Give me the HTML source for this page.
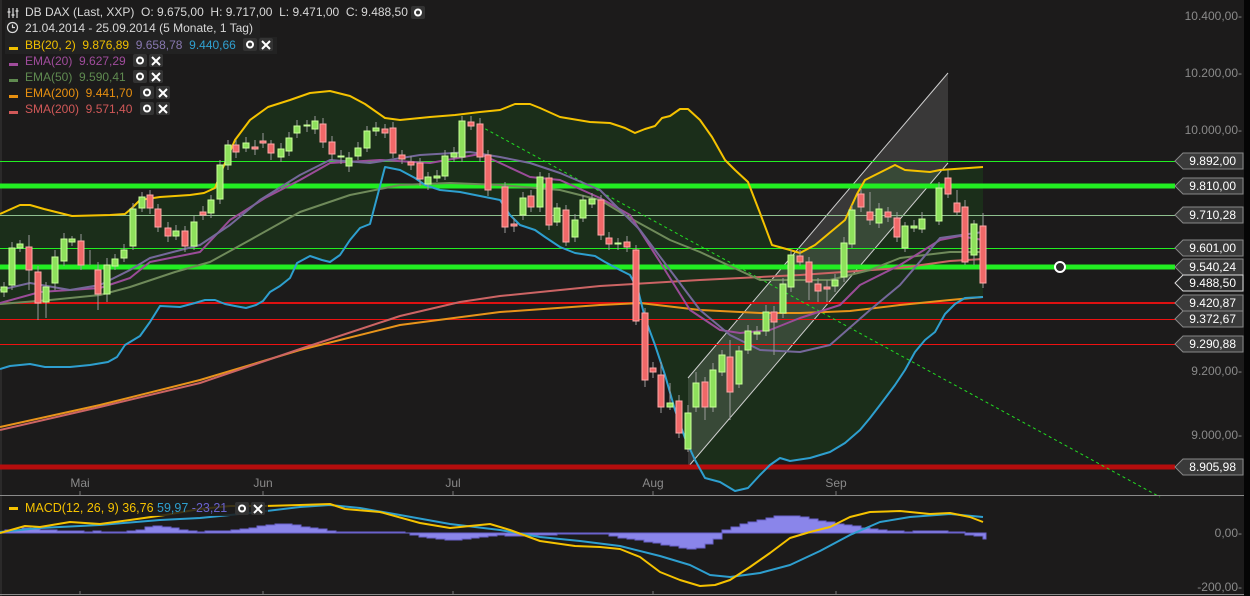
<!DOCTYPE html>
<html><head><meta charset="utf-8"><style>
html,body{margin:0;padding:0;background:#1c1b1b;width:1250px;height:596px;overflow:hidden;font-family:"Liberation Sans",sans-serif}
svg{display:block}
</style></head><body>
<svg width="1250" height="596" viewBox="0 0 1250 596" xmlns="http://www.w3.org/2000/svg" font-family="Liberation Sans, sans-serif">
<rect width="1250" height="596" fill="#1c1b1b"/>
<rect x="1244" y="0" width="6" height="596" fill="#050505"/>
<line x1="1" y1="0" x2="1" y2="596" stroke="#3a3a3a"/>

<path fill="#1b2e1a" d="M0,214 L20,205 L30,205 L44,209 L72,216 L110,215 L125,214 L132,208 L140,200 L160,197 L190,195 L204,193 L215,188 L222,170 L235,140 L250,120 L268,107 L290,100 L310,93 L330,91 L350,96 L365,104 L385,118 L400,120 L430,117 L455,115 L480,112 L500,110 L515,104 L530,104 L540,108 L560,117 L590,122 L610,123 L625,128 L635,133 L645,129 L655,126 L662,118 L670,116 L680,109 L688,109 L700,120 L712,137 L725,160 L735,170 L748,182 L760,213 L772,245 L790,250 L800,253 L815,245 L833,230 L845,220 L857,194 L865,180 L875,175 L885,170 L895,165 L905,170 L930,172 L940,170 L983,167 L983,297 L965,298 L955,304 L945,314 L935,332 L925,340 L915,352 L905,370 L895,385 L880,405 L870,418 L860,430 L845,443 L830,452 L810,458 L790,461 L780,458 L770,465 L760,475 L748,488 L735,491 L720,482 L705,478 L695,460 L685,438 L675,410 L665,375 L655,345 L645,318 L638,290 L630,275 L620,270 L605,262 L595,256 L575,253 L560,247 L545,237 L535,230 L520,225 L510,215 L500,200 L460,192 L440,190 L425,185 L415,178 L400,170 L385,167 L370,224 L360,228 L350,240 L340,255 L330,262 L322,260 L310,256 L297,263 L290,278 L280,286 L270,292 L263,301 L256,305 L246,308 L235,306 L225,304 L215,300 L205,300 L195,303 L180,307 L160,306 L150,322 L140,336 L125,345 L117,357 L108,362 L90,365 L70,367 L45,367 L30,364 L10,366 L0,369 Z"/>

<polygon points="688,378 948,73 948,163 688,467" fill="rgba(255,255,255,0.13)"/>
<line x1="688" y1="378" x2="948" y2="73" stroke="#cfcfcf" stroke-width="1"/>
<line x1="688" y1="467" x2="948" y2="163" stroke="#cfcfcf" stroke-width="1"/>

<line x1="0" y1="161.5" x2="1175" y2="161.5" stroke="#22ee22" stroke-width="1"/>
<line x1="0" y1="186" x2="1175" y2="186" stroke="#22ee22" stroke-width="5"/>
<line x1="0" y1="215.5" x2="1175" y2="215.5" stroke="#8fc08f" stroke-width="1"/>
<line x1="0" y1="248.5" x2="1175" y2="248.5" stroke="#22ee22" stroke-width="1"/>
<line x1="0" y1="267" x2="1175" y2="267" stroke="#22ee22" stroke-width="5"/>
<line x1="0" y1="303" x2="1175" y2="303" stroke="#dd1111" stroke-width="2"/>
<line x1="0" y1="319.5" x2="1175" y2="319.5" stroke="#ee1111" stroke-width="1"/>
<line x1="0" y1="344.5" x2="1175" y2="344.5" stroke="#ee1111" stroke-width="1"/>
<line x1="0" y1="467" x2="1175" y2="467" stroke="#b50d0d" stroke-width="5"/>

<line x1="480" y1="126" x2="1160" y2="497" stroke="#22dd22" stroke-width="1" stroke-dasharray="3,3"/>

<g fill="none" stroke-width="2" stroke-linejoin="round">
<path stroke="#e8941a" d="M0,427 L100,405 L200,380 L300,350 L400,325 L500,312 L600,305 L640,303 L700,310 L760,313 L800,313 L850,311 L900,305 L950,300 L983,297"/>
<path stroke="#cc6464" d="M0,430 L100,407 L200,383 L300,349 L400,316 L460,302 L500,296 L600,286 L700,280 L800,275 L900,268 L950,261 L983,259"/>
<path stroke="#6f8a5a" d="M0,304 L50,300 L100,295 L130,287 L175,272 L210,262 L250,240 L300,212 L350,195 L400,185 L450,183 L500,185 L560,190 L600,200 L630,218 L670,240 L700,252 L760,280 L830,280 L870,270 L900,258 L950,252 L983,252"/>
<path stroke="#9a4c98" d="M0,303 L40,292 L100,288 L130,278 L150,262 L200,252 L230,220 L265,198 L300,180 L330,163 L380,160 L430,163 L480,154 L500,163 L530,177 L560,180 L600,198 L630,215 L660,262 L690,310 L720,330 L740,333 L770,330 L800,318 L840,305 L860,285 L900,265 L940,240 L960,236 L983,240"/>
<path stroke="#75689a" d="M0,290 L30,283 L70,290 L100,285 L130,270 L150,258 L200,245 L230,225 L260,200 L300,175 L330,160 L370,163 L420,155 L470,152 L500,157 L530,163 L560,173 L600,190 L640,230 L670,270 L700,310 L730,335 L760,350 L800,352 L830,345 L870,310 L900,285 L940,238 L983,232"/>
<path stroke="#f5c200" d="M0,214 L20,205 L30,205 L44,209 L72,216 L110,215 L125,214 L132,208 L140,200 L160,197 L190,195 L204,193 L215,188 L222,170 L235,140 L250,120 L268,107 L290,100 L310,93 L330,91 L350,96 L365,104 L385,118 L400,120 L430,117 L455,115 L480,112 L500,110 L515,104 L530,104 L540,108 L560,117 L590,122 L610,123 L625,128 L635,133 L645,129 L655,126 L662,118 L670,116 L680,109 L688,109 L700,120 L712,137 L725,160 L735,170 L748,182 L760,213 L772,245 L790,250 L800,253 L815,245 L833,230 L845,220 L857,194 L865,180 L875,175 L885,170 L895,165 L905,170 L930,172 L940,170 L983,167"/>
<path stroke="#2e9fcf" d="M0,369 L10,366 L30,364 L45,367 L70,367 L90,365 L108,362 L117,357 L125,345 L140,336 L150,322 L160,306 L180,307 L195,303 L205,300 L215,300 L225,304 L235,306 L246,308 L256,305 L263,301 L270,292 L280,286 L290,278 L297,263 L310,256 L322,260 L330,262 L340,255 L350,240 L360,228 L370,224 L385,167 L400,170 L415,178 L425,185 L440,190 L460,192 L500,200 L510,215 L520,225 L535,230 L545,237 L560,247 L575,253 L595,256 L605,262 L620,270 L630,275 L638,290 L645,318 L655,345 L665,375 L675,410 L685,438 L695,460 L705,478 L720,482 L735,491 L748,488 L760,475 L770,465 L780,458 L790,461 L810,458 L830,452 L845,443 L860,430 L870,418 L880,405 L895,385 L905,370 L915,352 L925,340 L935,332 L945,314 L955,304 L965,298 L983,297"/>
</g>

<g stroke="#9a9a9a" stroke-width="1">
<path d="M4,282V297 M12,242V290 M20,240V252 M29,235V290 M38,266V320 M46,282V318 M55,250V290 M64,233V266 M72,236V246 M81,234V270 M90,250V265 M98,262V310 M107,258V302 M115,254V270 M124,244V262 M133,203V250 M142,192V212 M150,190V214 M158,204V232 M168,222V242 M176,225V240 M185,226V252 M194,216V250 M203,206V220 M211,195V218 M220,160V204 M228,140V170 M236,140V158 M246,137V152 M255,140V155 M263,133V148 M271,140V160 M281,143V162 M289,132V156 M297,120V138 M307,120V132 M315,116V134 M323,118V148 M332,136V160 M341,150V164 M349,152V172 M358,142V160 M367,126V152 M376,122V136 M385,124V138 M393,122V158 M402,150V164 M411,156V170 M420,158V186 M428,172V190 M437,170V182 M445,150V180 M454,147V162 M462,116V162 M471,116V130 M480,118V162 M488,150V196 M505,182V233 M514,218V232 M523,192V220 M531,190V212 M540,172V212 M549,173V230 M557,203V226 M566,205V246 M575,214V242 M583,195V222 M592,193V208 M601,195V240 M609,232V250 M618,238V250 M627,236V252 M636,245V325 M645,308V387 M653,362V378 M661,362V413 M670,383V410 M679,395V438 M688,405V452 M696,372V412 M705,377V420 M713,363V412 M722,350V376 M730,340V420 M739,346V388 M748,325V354 M757,326V340 M766,305V336 M774,306V355 M783,278V318 M791,250V292 M800,250V266 M809,257V300 M818,278V302 M827,280V302 M835,274V292 M844,237V282 M852,205V248 M861,189V212 M870,192V225 M879,203V228 M888,207V222 M897,212V242 M905,222V252 M914,220V232 M922,212V233 M939,182V225 M948,170V198 M957,190V216 M965,200V265 M974,220V265 M983,213V288"/>
</g>
<g fill="#8ee05c" stroke="#c8ff98" stroke-width="1">
<rect x="1" y="287" width="6" height="5"/><rect x="9" y="248" width="6" height="37"/><rect x="17" y="244" width="6" height="4"/><rect x="43" y="287" width="6" height="15"/><rect x="52" y="257" width="6" height="26"/><rect x="61" y="239" width="6" height="22"/><rect x="69" y="239" width="6" height="3"/><rect x="104" y="265" width="6" height="29"/><rect x="112" y="259" width="6" height="7"/><rect x="121" y="250" width="6" height="8"/><rect x="130" y="209" width="6" height="37"/><rect x="139" y="197" width="6" height="11"/><rect x="173" y="231" width="6" height="5"/><rect x="191" y="222" width="6" height="24"/><rect x="208" y="200" width="6" height="13"/><rect x="217" y="165" width="6" height="34"/><rect x="225" y="145" width="6" height="20"/><rect x="243" y="143" width="6" height="5"/><rect x="278" y="149" width="6" height="8"/><rect x="286" y="138" width="6" height="13"/><rect x="294" y="126" width="6" height="7"/><rect x="304" y="125" width="6" height="1"/><rect x="312" y="121" width="6" height="8"/><rect x="338" y="156" width="6" height="1"/><rect x="346" y="158" width="6" height="8"/><rect x="355" y="148" width="6" height="8"/><rect x="364" y="131" width="6" height="17"/><rect x="373" y="128" width="6" height="3"/><rect x="425" y="177" width="6" height="7"/><rect x="434" y="176" width="6" height="2"/><rect x="442" y="156" width="6" height="20"/><rect x="451" y="153" width="6" height="4"/><rect x="459" y="121" width="6" height="36"/><rect x="520" y="198" width="6" height="17"/><rect x="537" y="177" width="6" height="30"/><rect x="554" y="208" width="6" height="14"/><rect x="572" y="220" width="6" height="17"/><rect x="580" y="200" width="6" height="18"/><rect x="589" y="199" width="6" height="5"/><rect x="615" y="243" width="6" height="1"/><rect x="667" y="403" width="6" height="4"/><rect x="685" y="413" width="6" height="36"/><rect x="693" y="383" width="6" height="24"/><rect x="710" y="370" width="6" height="37"/><rect x="719" y="355" width="6" height="17"/><rect x="736" y="351" width="6" height="33"/><rect x="745" y="331" width="6" height="19"/><rect x="754" y="332" width="6" height="2"/><rect x="763" y="312" width="6" height="19"/><rect x="780" y="284" width="6" height="29"/><rect x="788" y="255" width="6" height="32"/><rect x="832" y="280" width="6" height="6"/><rect x="841" y="243" width="6" height="34"/><rect x="849" y="210" width="6" height="34"/><rect x="876" y="209" width="6" height="14"/><rect x="902" y="226" width="6" height="22"/><rect x="911" y="226" width="6" height="2"/><rect x="919" y="219" width="6" height="10"/><rect x="936" y="188" width="6" height="33"/><rect x="971" y="224" width="6" height="31"/>
</g>
<g fill="#f06868" stroke="#ffa8a8" stroke-width="1">
<rect x="26" y="247" width="6" height="23"/><rect x="35" y="272" width="6" height="31"/><rect x="78" y="241" width="6" height="24"/><rect x="95" y="270" width="6" height="24"/><rect x="147" y="195" width="6" height="13"/><rect x="155" y="209" width="6" height="18"/><rect x="165" y="228" width="6" height="8"/><rect x="182" y="231" width="6" height="15"/><rect x="200" y="212" width="6" height="3"/><rect x="233" y="145" width="6" height="7"/><rect x="252" y="147" width="6" height="2"/><rect x="260" y="141" width="6" height="2"/><rect x="268" y="144" width="6" height="9"/><rect x="320" y="124" width="6" height="18"/><rect x="329" y="142" width="6" height="12"/><rect x="382" y="129" width="6" height="4"/><rect x="390" y="128" width="6" height="25"/><rect x="399" y="155" width="6" height="4"/><rect x="408" y="162" width="6" height="3"/><rect x="417" y="163" width="6" height="16"/><rect x="468" y="122" width="6" height="4"/><rect x="477" y="124" width="6" height="33"/><rect x="485" y="155" width="6" height="35"/><rect x="502" y="187" width="6" height="40"/><rect x="511" y="224" width="6" height="2"/><rect x="528" y="196" width="6" height="11"/><rect x="546" y="178" width="6" height="47"/><rect x="563" y="210" width="6" height="32"/><rect x="598" y="200" width="6" height="35"/><rect x="606" y="238" width="6" height="6"/><rect x="624" y="242" width="6" height="5"/><rect x="633" y="250" width="6" height="71"/><rect x="642" y="313" width="6" height="67"/><rect x="650" y="368" width="6" height="4"/><rect x="658" y="375" width="6" height="32"/><rect x="676" y="401" width="6" height="32"/><rect x="702" y="382" width="6" height="25"/><rect x="727" y="357" width="6" height="35"/><rect x="771" y="312" width="6" height="10"/><rect x="797" y="256" width="6" height="6"/><rect x="806" y="262" width="6" height="20"/><rect x="815" y="284" width="6" height="7"/><rect x="824" y="287" width="6" height="2"/><rect x="858" y="194" width="6" height="13"/><rect x="867" y="212" width="6" height="8"/><rect x="885" y="212" width="6" height="5"/><rect x="894" y="218" width="6" height="19"/><rect x="945" y="178" width="6" height="16"/><rect x="954" y="203" width="6" height="9"/><rect x="962" y="207" width="6" height="55"/><rect x="980" y="226" width="6" height="57"/>
</g>

<circle cx="1060" cy="267" r="5" fill="#2a2a2a" stroke="#fff" stroke-width="2"/>

<g fill="#8a8a8a" font-size="12" text-anchor="end">
<text x="1242" y="20">10.400,00-</text>
<text x="1242" y="77">10.200,00-</text>
<text x="1242" y="134">10.000,00-</text>
<text x="1242" y="375">9.200,00-</text>
<text x="1242" y="439">9.000,00-</text>
</g>
<g font-size="12" fill="#fff" text-anchor="end">
<g stroke="#888" fill="#3a3a3a">
<polygon points="1175,161 1183,153 1243,153 1243,169 1183,169"/>
<polygon points="1175,186 1183,178 1243,178 1243,194 1183,194"/>
<polygon points="1175,215 1183,207 1243,207 1243,223 1183,223"/>
<polygon points="1175,248 1183,240 1243,240 1243,256 1183,256"/>
<polygon points="1175,267 1183,259 1243,259 1243,275 1183,275"/>
<polygon points="1175,283 1183,275 1243,275 1243,291 1183,291" stroke="#ddd" fill="#2a2a2a"/>
<polygon points="1175,303 1183,295 1243,295 1243,311 1183,311"/>
<polygon points="1175,319 1183,311 1243,311 1243,327 1183,327"/>
<polygon points="1175,344 1183,336 1243,336 1243,352 1183,352"/>
<polygon points="1175,467 1183,459 1243,459 1243,475 1183,475"/>
</g>
<text x="1236" y="165">9.892,00</text>
<text x="1236" y="190">9.810,00</text>
<text x="1236" y="219">9.710,28</text>
<text x="1236" y="252">9.601,00</text>
<text x="1236" y="271">9.540,24</text>
<text x="1236" y="287">9.488,50</text>
<text x="1236" y="307">9.420,87</text>
<text x="1236" y="323">9.372,67</text>
<text x="1236" y="348">9.290,88</text>
<text x="1236" y="471">8.905,98</text>
</g>

<g fill="#8a8a8a" font-size="12" text-anchor="middle">
<text x="80" y="487">Mai</text><text x="263" y="487">Jun</text><text x="453" y="487">Jul</text><text x="653" y="487">Aug</text><text x="836" y="487">Sep</text>
</g>
<g stroke="#777"><path d="M80,491V495 M263,491V495 M453,491V495 M653,491V495 M836,491V495 M80,591V595 M263,591V595 M453,591V595 M653,591V595 M836,591V595"/></g>
<line x1="0" y1="495.5" x2="1244" y2="495.5" stroke="#8a8a8a"/>
<line x1="0" y1="594.5" x2="1244" y2="594.5" stroke="#8a8a8a"/>

<line x1="0" y1="533" x2="985" y2="533" stroke="#6a6ad0"/>
<path fill="#8a85ea" stroke="#6a62cc" stroke-width="1" d="M5,533V530H13V530H22V528H31V529H40V530H49V530H57V531H66V531H75V531H84V532H93V531H101V532H110V532H119V532H127V531H136V530H145V527H153V526H162V527H171V528H179V530H188V531H197V532H205V531H214V531H223V531H231V530H240V529H249V528H257V526H266V525H275V524H284V524H292V525H301V527H310V528H318V529H327V531H336V532H345V532H353V532H362V532H371V532H379V532H388V532H397V532H405V533Z"/>
<path fill="#8a85ea" stroke="#6a62cc" stroke-width="1" d="M410,533V535H419V537H427V538H436V539H445V540H453V540H462V539H471V538H479V537H488V536H497V535H505V536H514V536H523V536H531V535H540V535H549V535H557V534H566V534H575V534H583V534H592V534H601V534H609V536H618V538H627V539H635V540H644V542H653V543H661V545H670V546H679V548H687V549H696V548H705V544H713V539H722V533Z"/>
<path fill="#8a85ea" stroke="#6a62cc" stroke-width="1" d="M722,533V530H731V527H740V524H748V522H757V520H766V518H774V516H783V516H792V516H800V517H809V519H818V521H826V522H835V524H844V525H852V526H861V528H870V529H878V530H887V531H896V531H904V532H913V531H922V531H930V531H939V531H948V532H956V532H965V533Z"/>
<path fill="#8a85ea" stroke="#6a62cc" stroke-width="1" d="M965,533V535H974V536H983V539H986V533Z"/>
<g fill="none" stroke-width="2" stroke-linejoin="round">
<path stroke="#2e9fcf" d="M0,532 L40,528 L100,525 L160,520 L200,518 L250,513 L300,507 L330,505 L360,508 L400,515 L450,524 L500,530 L540,537 L580,541 L620,546 L660,556 L690,565 L710,575 L730,577 L760,573 L790,565 L820,551 L850,535 L880,522 L910,517 L950,514 L983,517"/>
<path stroke="#f5c200" d="M0,533 L25,526 L40,527 L70,522 L100,524 L130,520 L165,515 L200,509 L230,506 L265,506 L300,505 L330,504 L345,509 L380,512 L420,523 L450,528 L470,526 L490,524 L510,530 L540,541 L575,546 L600,547 L620,549 L640,557 L660,572 L680,580 L700,586 L715,585 L730,580 L750,567 L770,553 L790,538 L810,532 L830,527 L850,517 L870,512 L900,511 L930,514 L950,513 L970,517 L983,522"/>
</g>
<g fill="#8a8a8a" font-size="12" text-anchor="end">
<text x="1242" y="537">0,00-</text>
<text x="1242" y="591">-200,00-</text>
</g>
<rect x="6" y="500" width="262" height="16" fill="#1c1b1b" opacity="0.85"/>
<rect x="9" y="507" width="9" height="3" fill="#f5c200"/>
<text x="25" y="512" font-size="12.5" fill="#f5c200">MACD(12, 26, 9) 36,76 <tspan fill="#2e9fcf">59,97</tspan> <tspan fill="#6a62cc">-23,21</tspan></text>
<rect x="235" y="502" width="14" height="13" rx="2" fill="#333"/>
<circle cx="242" cy="508.5" r="3" fill="none" stroke="#fff" stroke-width="2"/>
<rect x="251" y="502" width="14" height="13" rx="2" fill="#333"/>
<path d="M254,505 L262,513 M262,505 L254,513" stroke="#fff" stroke-width="2"/>

<rect x="5" y="3" width="423" height="17" fill="#1c1b1b"/>
<rect x="5" y="20" width="255" height="17" fill="#222"/>
<rect x="5" y="37" width="272" height="17" fill="#222"/>
<g font-size="12">
<text x="25" y="16" fill="#d8d8d8" style="white-space:pre">DB DAX (Last, XXP)  O: 9.675,00  H: 9.717,00  L: 9.471,00  C: 9.488,50</text>
<text x="25" y="32" fill="#d8d8d8">21.04.2014 - 25.09.2014 (5 Monate, 1 Tag)</text>
<text x="25" y="49" fill="#f0c000" style="white-space:pre">BB(20, 2)  9.876,89  <tspan fill="#8878b0">9.658,78</tspan>  <tspan fill="#30a0d0">9.440,66</tspan></text>
<text x="25" y="65" fill="#a04c9c" style="white-space:pre">EMA(20)  9.627,29</text>
<text x="25" y="81" fill="#5f8a50" style="white-space:pre">EMA(50)  9.590,41</text>
<text x="25" y="97" fill="#e89010" style="white-space:pre">EMA(200)  9.441,70</text>
<text x="25" y="113" fill="#d05858" style="white-space:pre">SMA(200)  9.571,40</text>
</g>
<g>
<rect x="9" y="47" width="9" height="3" fill="#f0c000"/>
<rect x="9" y="63" width="9" height="3" fill="#a04c9c"/>
<rect x="9" y="79" width="9" height="3" fill="#5f8a50"/>
<rect x="9" y="95" width="9" height="3" fill="#e89010"/>
<rect x="9" y="111" width="9" height="3" fill="#d05858"/>
</g>
<g stroke="#ddd" fill="none" stroke-width="1.2">
<path d="M9,8V18 M13,8V18 M17,8V18"/>
<path d="M7.5,12H10.5 M11.5,15H14.5 M15.5,11H18.5"/>
<circle cx="12.5" cy="27.5" r="5"/>
<path d="M12.5,24.5V27.5H15"/>
</g>
<g>
<rect x="411" y="6" width="14" height="13" rx="2" fill="#333"/><circle cx="418" cy="12.5" r="3" fill="none" stroke="#fff" stroke-width="2"/>
<rect x="243" y="38" width="14" height="13" rx="2" fill="#333"/><circle cx="250" cy="44.5" r="3" fill="none" stroke="#fff" stroke-width="2"/>
<rect x="259" y="38" width="14" height="13" rx="2" fill="#333"/><path d="M262,41 L270,49 M270,41 L262,49" stroke="#fff" stroke-width="2"/>
<rect x="133" y="54" width="14" height="13" rx="2" fill="#333"/><circle cx="140" cy="60.5" r="3" fill="none" stroke="#fff" stroke-width="2"/>
<rect x="149" y="54" width="14" height="13" rx="2" fill="#333"/><path d="M152,57 L160,65 M160,57 L152,65" stroke="#fff" stroke-width="2"/>
<rect x="133" y="70" width="14" height="13" rx="2" fill="#333"/><circle cx="140" cy="76.5" r="3" fill="none" stroke="#fff" stroke-width="2"/>
<rect x="149" y="70" width="14" height="13" rx="2" fill="#333"/><path d="M152,73 L160,81 M160,73 L152,81" stroke="#fff" stroke-width="2"/>
<rect x="140" y="86" width="14" height="13" rx="2" fill="#333"/><circle cx="147" cy="92.5" r="3" fill="none" stroke="#fff" stroke-width="2"/>
<rect x="156" y="86" width="14" height="13" rx="2" fill="#333"/><path d="M159,89 L167,97 M167,89 L159,97" stroke="#fff" stroke-width="2"/>
<rect x="140" y="102" width="14" height="13" rx="2" fill="#333"/><circle cx="147" cy="108.5" r="3" fill="none" stroke="#fff" stroke-width="2"/>
<rect x="156" y="102" width="14" height="13" rx="2" fill="#333"/><path d="M159,105 L167,113 M167,105 L159,113" stroke="#fff" stroke-width="2"/>
</g>
</svg>
</body></html>
